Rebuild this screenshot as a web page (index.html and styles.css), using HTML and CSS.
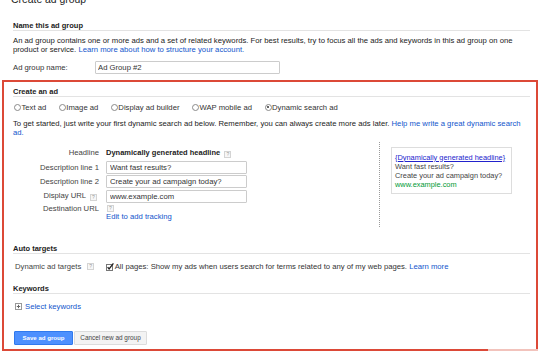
FILE: index.html
```html
<!DOCTYPE html>
<html>
<head>
  <title>Create ad group</title>
  <link rel="stylesheet" href="styles.css">
</head>
<body>
  <h1 class="page-title">Create ad group</h1>

  <div class="section name-section">
    <h2 class="section-title">Name this ad group</h2>
    <p class="intro">An ad group contains one or more ads and a set of related keywords. For best results, try to focus all the ads and keywords in this ad group on one product or service. <a href="#">Learn more about how to structure your account.</a></p>
    <div class="name-row">
      <label for="groupName">Ad group name:</label>
      <input id="groupName" type="text" value="Ad Group #2">
    </div>
  </div>

  <div class="ad-box">
    <div class="section">
      <h2 class="section-title">Create an ad</h2>
      <div class="ad-types">
        <span class="ad-type"><span class="radio"></span>Text ad</span>
        <span class="ad-type"><span class="radio"></span>Image ad</span>
        <span class="ad-type"><span class="radio"></span>Display ad builder</span>
        <span class="ad-type"><span class="radio"></span>WAP mobile ad</span>
        <span class="ad-type"><span class="radio checked"></span>Dynamic search ad</span>
      </div>
      <p class="hint">To get started, just write your first dynamic search ad below. Remember, you can always create more ads later. <a href="#">Help me write a great dynamic search ad.</a></p>

      <div class="ad-form">
        <div class="fields">
          <div class="field-label headline-row">Headline</div>
          <div class="headline-value headline-row">Dynamically generated headline <span class="help">?</span></div>

          <div class="field-label">Description line 1</div>
          <input class="field-input" type="text" value="Want fast results?">

          <div class="field-label">Description line 2</div>
          <input class="field-input" type="text" value="Create your ad campaign today?">

          <div class="field-label">Display URL <span class="help label-help">?</span></div>
          <input class="field-input" type="text" value="www.example.com">

          <div class="field-label top">Destination URL</div>
          <div class="dest-value">
            <span class="help">?</span>
            <a href="#" class="edit-link">Edit to add tracking</a>
          </div>
        </div>

        <div class="preview-col">
          <div class="preview">
            <a href="#" class="preview-headline">{Dynamically generated headline}</a>
            <div>Want fast results?</div>
            <div>Create your ad campaign today?</div>
            <div class="preview-url">www.example.com</div>
          </div>
        </div>
      </div>
    </div>

    <div class="section targets-section">
      <h2 class="section-title">Auto targets</h2>
      <div class="targets-row">
        <span class="targets-label">Dynamic ad targets</span>
        <span class="help">?</span>
        <svg class="checkbox" width="8" height="8" viewBox="0 0 8 8">
          <rect x="0.5" y="1.5" width="6" height="6" fill="#fff" stroke="#777"/>
          <path d="M1.6 4.2 L3.1 6 L7.4 0.4" fill="none" stroke="#222" stroke-width="1.3"/>
        </svg>
        <span>All pages: Show my ads when users search for terms related to any of my web pages. <a href="#">Learn more</a></span>
      </div>
    </div>

    <div class="section keywords-section">
      <h2 class="section-title">Keywords</h2>
      <div class="keywords-row">
        <svg class="plus-box" width="7" height="7" viewBox="0 0 7 7">
          <rect x="0.5" y="0.5" width="6" height="6" fill="#fff" stroke="#999"/>
          <path d="M3.5 1.8 V5.2 M1.8 3.5 H5.2" stroke="#666" stroke-width="1"/>
        </svg>
        <a href="#">Select keywords</a>
      </div>
    </div>

    <div class="buttons">
      <button class="btn btn-save">Save ad group</button>
      <button class="btn btn-cancel">Cancel new ad group</button>
    </div>
  </div>
</body>
</html>
```

FILE: styles.css
```css
* {
  box-sizing: border-box;
}

body {
  margin: 0;
  font-family: "Liberation Sans", Arial, sans-serif;
  font-size: 7.7px;
  line-height: 9px;
  color: #222;
  background-color: #fff;
  overflow: hidden;
}

a {
  color: #15c;
  text-decoration: none;
}

p {
  margin: 0;
}

.page-title {
  margin: -6px 0 0 11px;
  font-size: 10.4px;
  line-height: 12px;
  font-weight: normal;
  color: #222;
}

.section-title {
  margin: 0;
  font-size: 7.5px;
  line-height: 9px;
  font-weight: bold;
  color: #222;
  border-bottom: 1px solid #e3e3e3;
}

/* Name this ad group */
.name-section {
  margin: 14.5px 14px 0 13px;
}

.intro {
  margin-top: 5.5px;
  line-height: 9px;
}

.name-row {
  display: flex;
  align-items: center;
  margin-top: 7px;
}

.name-row label {
  width: 82px;
  color: #333;
}

.name-row input {
  width: 185px;
  height: 13px;
  padding: 0 2px;
  border: 1px solid #ccc;
  border-radius: 1px;
  font-family: inherit;
  font-size: 7.7px;
  color: #333;
}

/* Red highlighted box */
.ad-box {
  position: relative;
  margin: 6px 6px 0 2px;
  padding: 4.5px 6px 4.5px 9px;
  border: 2px solid #dc4937;
}

.ad-box::after {
  content: "";
  position: absolute;
  right: -2px;
  bottom: -2px;
  width: 50px;
  height: 2px;
  background-color: #f2c3bc;
}

.ad-types {
  display: flex;
  gap: 11.5px;
  margin-top: 6px;
  color: #333;
}

.ad-type {
  display: inline-flex;
  align-items: center;
}

.radio {
  display: inline-block;
  position: relative;
  width: 7px;
  height: 7px;
  margin: 0 0.5px 0 1px;
  border: 1px solid #8a8a8a;
  border-radius: 50%;
  background-color: #fff;
}

.radio.checked::after {
  content: "";
  position: absolute;
  top: 1.5px;
  left: 1.5px;
  width: 2px;
  height: 2px;
  border-radius: 50%;
  background-color: #333;
}

.hint {
  margin-top: 7px;
  width: 515px;
}

/* Ad form with preview */
.ad-form {
  display: flex;
  margin-top: 5.5px;
}

.fields {
  flex: 0 0 366px;
  display: grid;
  grid-template-columns: 86px 141px;
  column-gap: 7px;
  row-gap: 1.5px;
  align-items: center;
  padding: 6px 0 5.5px;
}

.field-label {
  text-align: right;
  color: #444;
  white-space: nowrap;
}

.field-label.top {
  align-self: start;
}

.headline-row {
  margin-bottom: 1.5px;
}

.headline-value {
  font-weight: bold;
  font-size: 7.5px;
  white-space: nowrap;
}

.field-input {
  width: 141px;
  height: 13px;
  padding: 0 3px;
  border: 1px solid #ccc;
  border-radius: 1px;
  font-family: inherit;
  font-size: 7.7px;
  color: #333;
}

.dest-value {
  display: flex;
  flex-direction: column;
  align-items: flex-start;
}

.dest-value .help {
  margin: 1px 0 0 1px;
}

.help {
  display: inline-block;
  width: 7px;
  height: 7px;
  border: 1px solid #d4d4d4;
  background-color: #f7f7f7;
  color: #999;
  font-size: 5px;
  font-weight: normal;
  line-height: 5px;
  text-align: center;
  vertical-align: -0.5px;
  margin-left: 2px;
}

.label-help {
  margin: 0 2px 0 2px;
}

.preview-col {
  border-left: 1px dotted #9a9a9a;
  padding-left: 11px;
}

.preview {
  width: 121px;
  margin-top: 5px;
  padding: 4.5px 3px 4px;
  border: 1px solid #ddd;
  color: #444;
  font-size: 7.4px;
  white-space: nowrap;
}

.preview-headline {
  display: block;
  color: #22c;
  text-decoration: underline;
}

.preview-url {
  color: #093;
}

/* Auto targets */
.targets-section {
  margin-top: 17.5px;
}

.targets-row {
  display: flex;
  align-items: center;
  margin-top: 8px;
  color: #333;
}

.targets-label {
  padding-left: 2px;
  color: #444;
}

.targets-row .help {
  margin-left: 6px;
}

.checkbox {
  margin-left: 12px;
  margin-right: 0.5px;
}

/* Keywords */
.keywords-section {
  margin-top: 13px;
}

.keywords-row {
  display: flex;
  align-items: center;
  margin-top: 8px;
  padding-left: 2px;
}

.plus-box {
  margin-right: 3px;
}

/* Buttons */
.buttons {
  display: flex;
  gap: 1px;
  margin-top: 19.5px;
  padding-left: 1px;
}

.btn {
  height: 14px;
  padding: 0;
  font-family: inherit;
  font-size: 6.4px;
  border-radius: 1px;
  cursor: pointer;
}

.btn-save {
  width: 59px;
  background-color: #4d90fe;
  border: 1px solid #3079ed;
  color: #fff;
  font-weight: bold;
  font-size: 6.1px;
}

.btn-cancel {
  width: 73px;
  background-color: #f3f3f3;
  border: 1px solid #dcdcdc;
  color: #444;
}
```
